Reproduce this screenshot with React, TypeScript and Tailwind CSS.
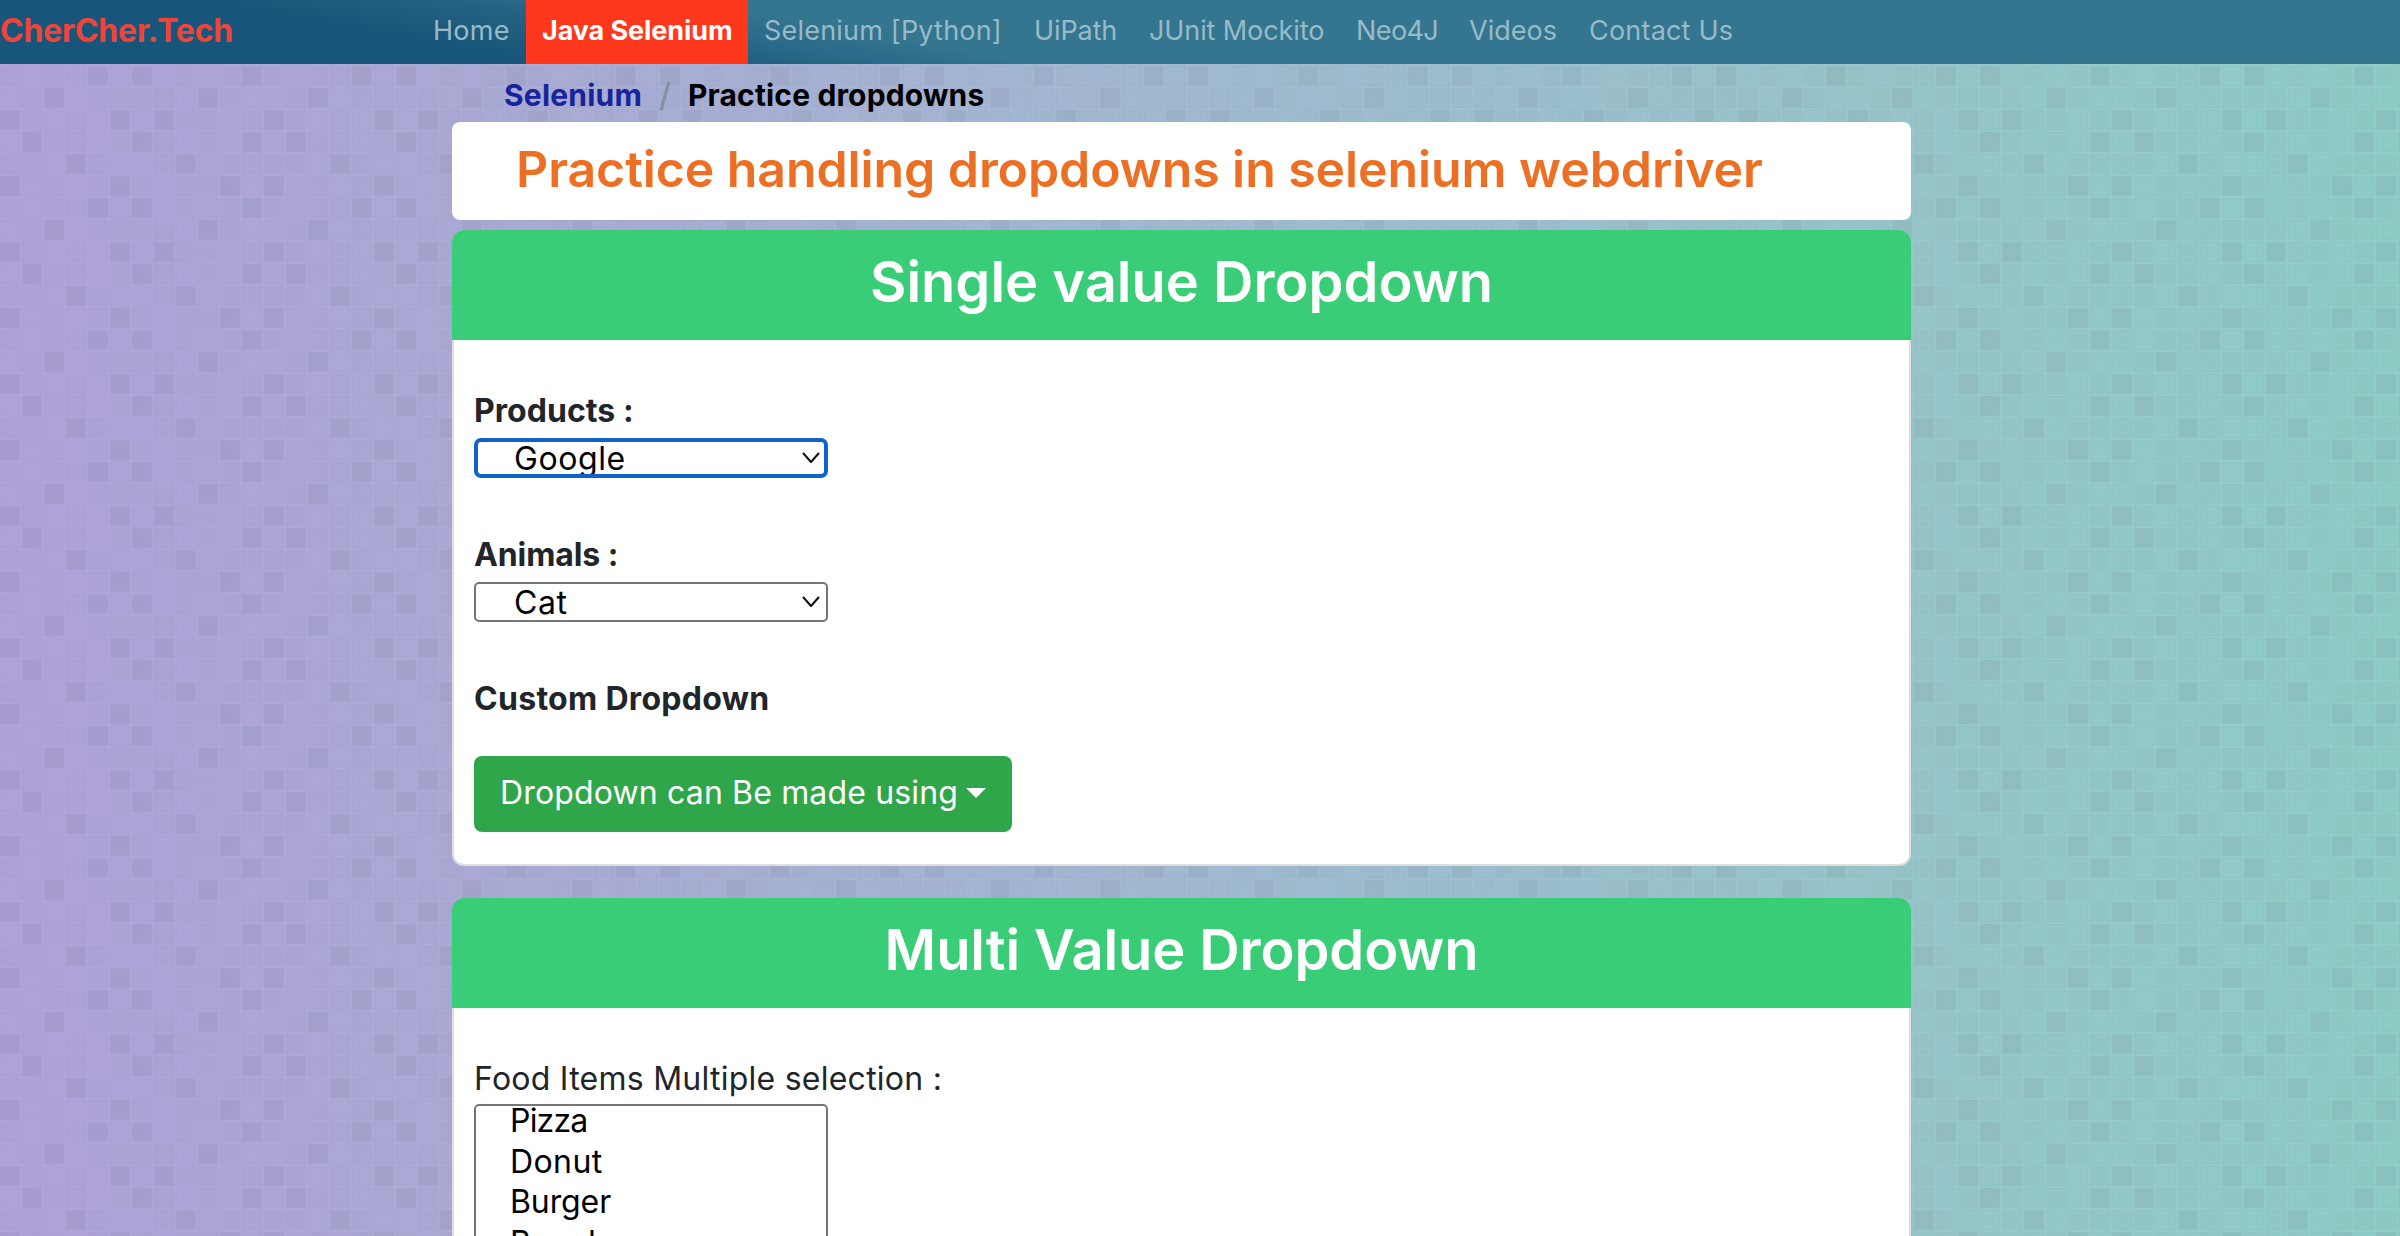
import type { ReactNode } from "react";

const NAV: { label: string; className: string; active?: boolean }[] = [
  { label: "Home", className: "w-[109px] tracking-[0.3px]" },
  { label: "Java Selenium", className: "w-[222px] tracking-[-0.1px]", active: true },
  { label: "Selenium [Python]", className: "w-[270px] tracking-[0.2px]" },
  { label: "UiPath", className: "w-[115px] tracking-[-0.1px]" },
  { label: "JUnit Mockito", className: "w-[207px] tracking-[-0.1px]" },
  { label: "Neo4J", className: "w-[113px] tracking-[-0.6px]" },
  { label: "Videos", className: "w-[120px]" },
  { label: "Contact Us", className: "w-[176px] tracking-[0.2px]" },
];

const TILE = 22;
// Columns of the darker and lighter tiles in each of the six rows of the repeating mosaic.
const DARK = [
  [1, 6, 11],
  [3, 8],
  [0, 5, 10],
  [4, 6, 11],
  [2, 9],
  [0, 5, 7],
];
const LIGHT = [
  [0, 4, 8, 10],
  [2, 5, 6, 9],
  [1, 3, 7, 11],
  [1, 5, 7, 9],
  [0, 3, 8, 11],
  [2, 4, 6, 10],
];

function Mosaic() {
  const tiles: ReactNode[] = [];
  for (let row = 0; row < 6; row++) {
    for (let col = 0; col < 12; col++) {
      const dark = DARK[row].includes(col);
      const light = LIGHT[row].includes(col);
      tiles.push(
        <rect
          key={`${row}-${col}`}
          x={col * TILE + 0.5}
          y={row * TILE + 0.5}
          width={19}
          height={19}
          fill="#5a5a78"
          fillOpacity={dark ? 0.1 : light ? 0.005 : 0.04}
          stroke="#5a5a78"
          strokeOpacity={0.045}
        />,
      );
    }
  }
  return (
    <svg className="absolute inset-0 h-full w-full" aria-hidden="true">
      <defs>
        <pattern id="mosaic" width={TILE * 12} height={TILE * 6} patternUnits="userSpaceOnUse">
          {tiles}
        </pattern>
      </defs>
      <rect width="100%" height="100%" fill="url(#mosaic)" />
    </svg>
  );
}

function Card({ title, titleClass, className, children }: { title: string; titleClass: string; className: string; children: ReactNode }) {
  return (
    <section className={`flex flex-col overflow-hidden rounded-[12px] bg-[#dfdfdf] ${className}`}>
      <h2 className={`flex h-[110px] shrink-0 items-center justify-center bg-[#3acd77] pb-[7px] text-[56px] font-semibold leading-none text-white ${titleClass}`}>
        {title}
      </h2>
      <div className="mx-[2px] mb-[2px] flex flex-1 flex-col items-start rounded-b-[10px] bg-white px-[20px]">{children}</div>
    </section>
  );
}

function Select({ value, focused = false }: { value: string; focused?: boolean }) {
  return (
    <div
      className={`flex h-[40px] w-[354px] items-center overflow-hidden bg-white text-[32px] leading-[38px] tracking-[0.6px] text-black ${
        focused ? "rounded-[7px] border-4 border-[#1062ce] pl-[36px] pr-[4px]" : "rounded-[5px] border-2 border-[#767676] pl-[38px] pr-[6px]"
      }`}
    >
      <span className="h-[36px] flex-1">{value}</span>
      <svg width="18" height="12" viewBox="0 0 18 12" fill="none" stroke="#101010" strokeWidth="2" strokeLinecap="round" strokeLinejoin="round">
        <path d="M1.5 1.5L9 10L16.5 1.5" />
      </svg>
    </div>
  );
}

export default function App() {
  return (
    <div className="relative h-[1236px] w-[2400px] overflow-hidden bg-[linear-gradient(90deg,#b1a2d9_0%,#ada7d6_12%,#a9aed4_27%,#a4b7d2_42%,#9ebecf_58%,#99c4cb_74%,#94cac9_90%,#8ecdc5_100%)] font-['Inter',sans-serif]">
      <Mosaic />
      <div className="relative flex flex-col">
        <nav className="flex h-[64px] items-stretch bg-[linear-gradient(10.4deg,#17567a_0%,#17567a_20%,#256384_29%,#34758f_38%,#34758f_100%)]">
          <div className="w-[417px] pt-[12px] text-[32px] font-bold leading-[38px] tracking-[-0.2px] text-[#f04438]">CherCher.Tech</div>
          {NAV.map((item) => (
            <div
              key={item.label}
              className={`whitespace-nowrap pl-[16px] pt-[14px] text-[27px] leading-[34px] ${item.className} ${
                item.active ? "bg-[#ff371c] font-bold text-white" : "text-[#99bac7]"
              }`}
            >
              {item.label}
            </div>
          ))}
        </nav>

        <main className="ml-[452px] flex w-[1459px] flex-col">
          <div className="flex h-[58px] items-center pl-[52px] pt-[4px] text-[30px] font-bold">
            <span className="w-[155px] tracking-[0.2px] text-[#17249b]">Selenium</span>
            <span className="w-[29px] text-[32px] font-medium text-[#81909a]">/</span>
            <span className="tracking-[0.15px] text-black">Practice dropdowns</span>
          </div>

          <h1 className="flex h-[98px] items-center rounded-[8px] bg-white pb-[4px] pl-[64px] text-[50px] font-semibold tracking-[-0.08px] text-[#ed6f23]">
            Practice handling dropdowns in selenium webdriver
          </h1>

          <Card title="Single value Dropdown" titleClass="" className="mt-[10px] h-[636px]">
            <div className="mt-[47px] h-[51px] text-[32px] font-bold leading-[48px] tracking-[0.05px] text-[#212529]">Products :</div>
            <Select value="Google" focused />
            <div className="mt-[53px] h-[51px] text-[32px] font-bold leading-[48px] tracking-[-0.1px] text-[#212529]">Animals :</div>
            <Select value="Cat" />
            <div className="mt-[53px] h-[81px] text-[32px] font-bold leading-[48px] tracking-[0.3px] text-[#212529]">Custom Dropdown</div>
            <button className="flex h-[76px] w-[538px] items-center rounded-[8px] bg-[#30a64a] pb-[2px] pl-[26px] text-[32px] tracking-[0.15px] text-white">
              <span className="w-[466px] whitespace-nowrap text-left">Dropdown can Be made using</span>
              <svg width="20" height="10" viewBox="0 0 20 10" fill="white">
                <path d="M0 0H20L10 10Z" />
              </svg>
            </button>
          </Card>

          <Card title="Multi Value Dropdown" titleClass="tracking-[-0.1px]" className="mt-[32px] h-[420px]">
            <div className="mt-[47px] h-[49px] text-[32px] leading-[48px] tracking-[0.25px] text-[#212529]">Food Items Multiple selection :</div>
            <div className="flex h-[200px] w-[354px] flex-col overflow-hidden rounded-[5px] border-2 border-[#767676] bg-white pl-[34px] text-[32px] leading-[40.5px] text-black">
              <span className="h-[35.5px] leading-[30.5px] tracking-[-0.8px]">Pizza</span>
              <span className="tracking-[0.4px]">Donut</span>
              <span className="tracking-[-0.1px]">Burger</span>
              <span className="tracking-[-0.8px]">Bread</span>
            </div>
          </Card>
        </main>
      </div>
    </div>
  );
}
